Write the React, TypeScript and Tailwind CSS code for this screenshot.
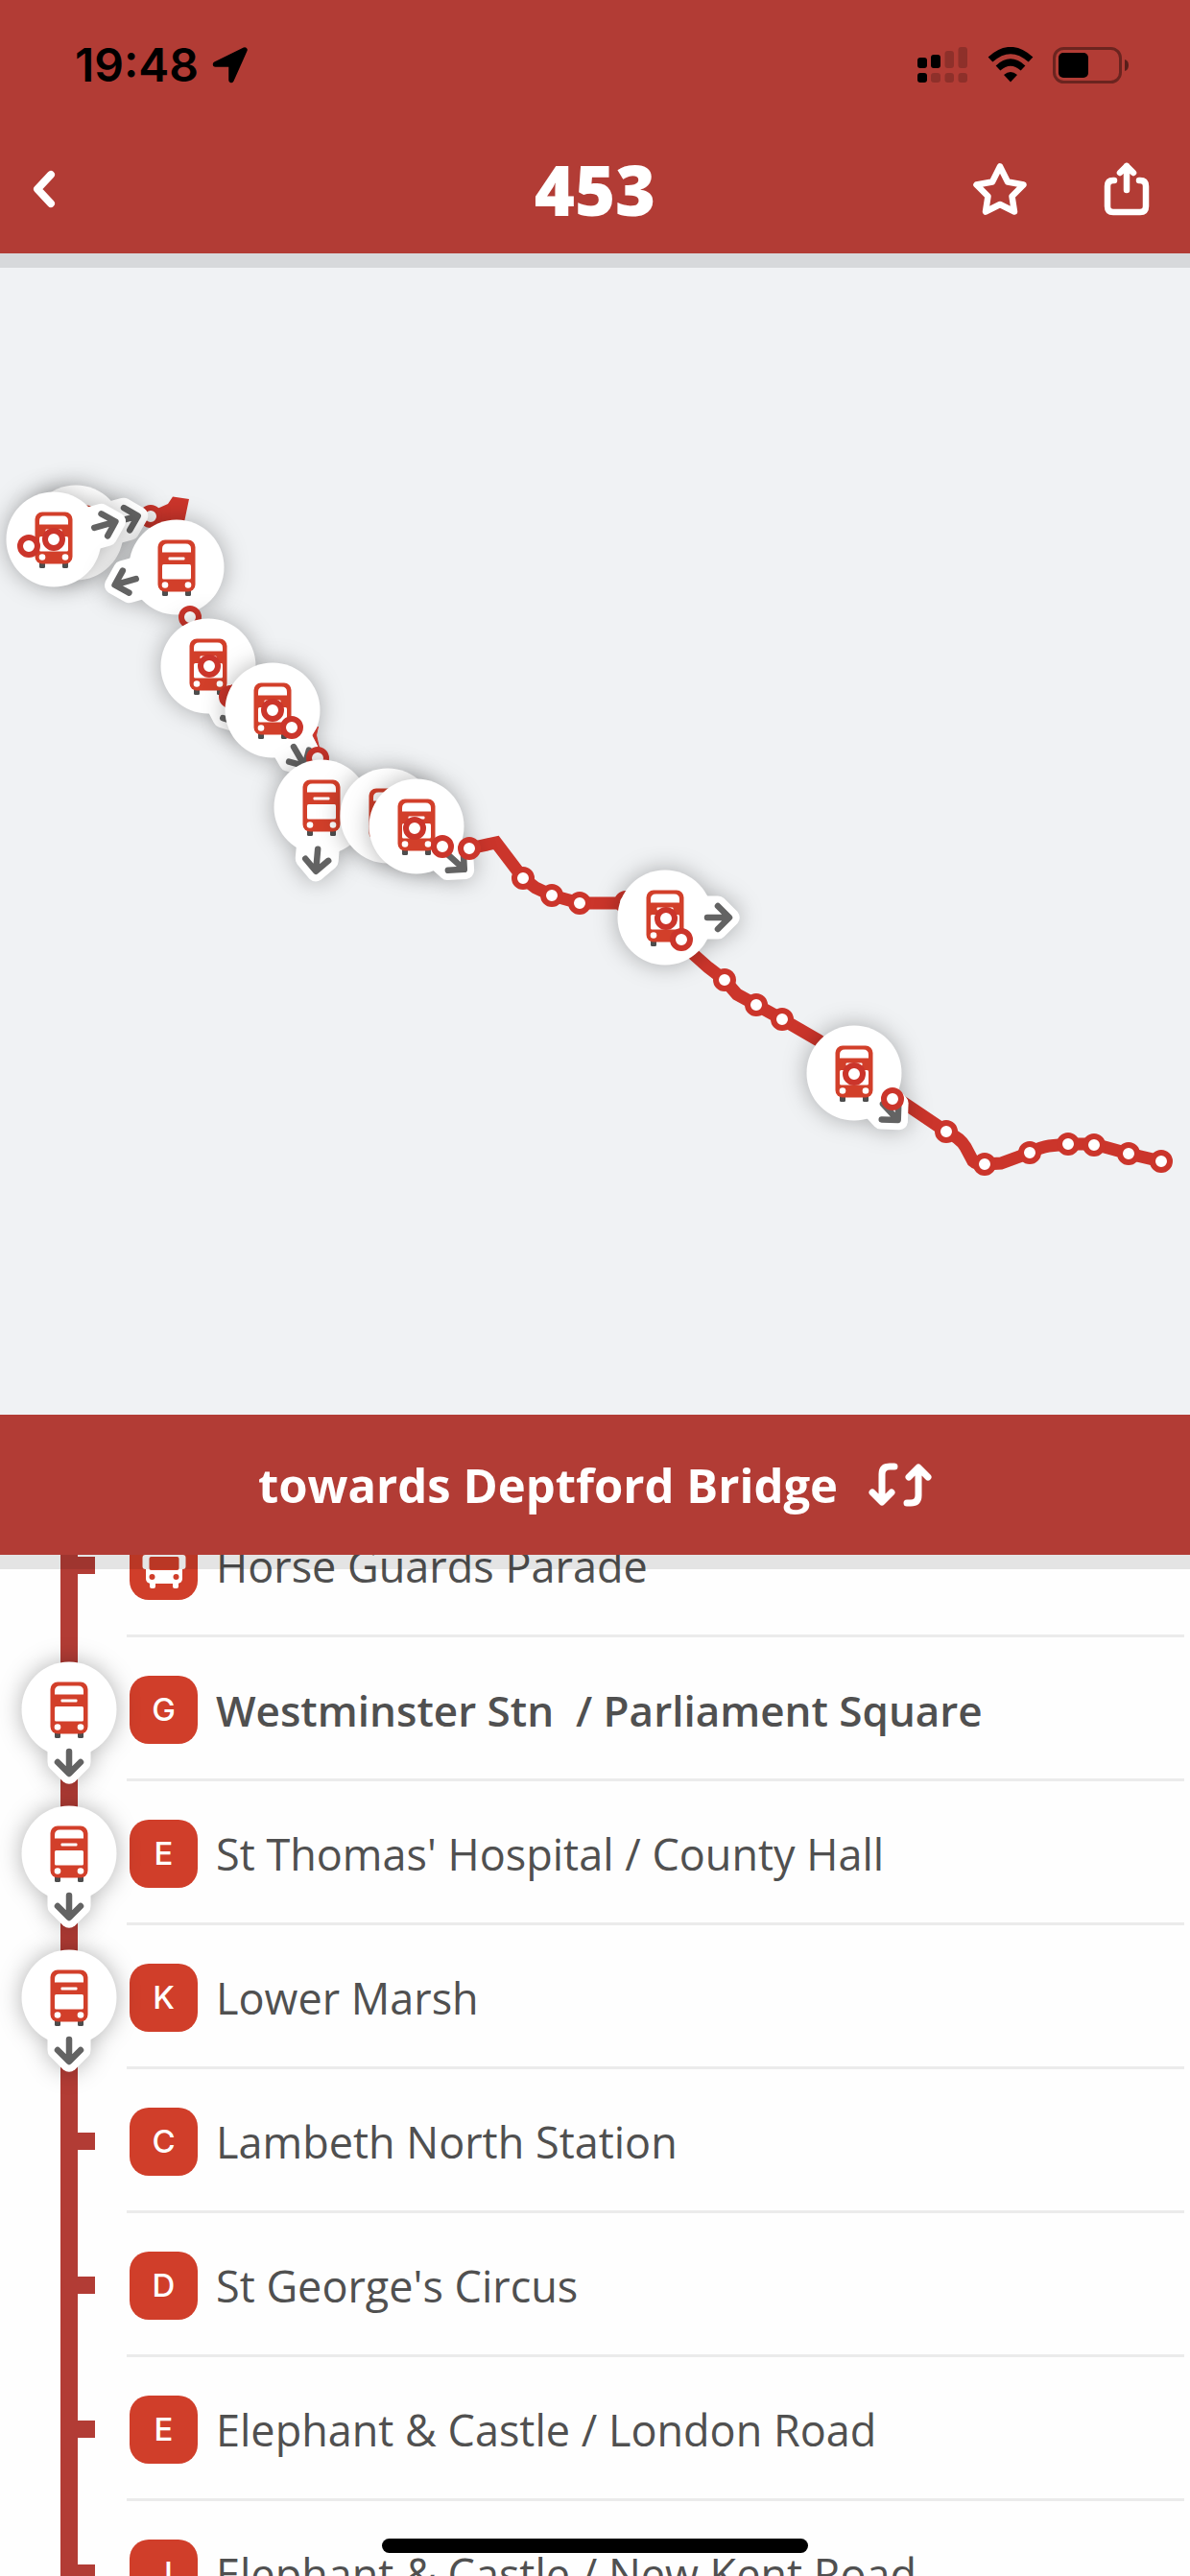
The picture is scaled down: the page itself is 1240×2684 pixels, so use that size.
import React from 'react'

type Stop = { code: string | null; name: string; major?: boolean; bus?: boolean }
type Vehicle = { x: number; y: number; heading: number; stopOnTop?: [number, number] }

const stops: Stop[] = [
  { code: null, name: 'Horse Guards Parade' },
  { code: 'G', name: 'Westminster Stn  / Parliament Square', major: true, bus: true },
  { code: 'E', name: "St Thomas' Hospital / County Hall", bus: true },
  { code: 'K', name: 'Lower Marsh', bus: true },
  { code: 'C', name: 'Lambeth North Station' },
  { code: 'D', name: "St George's Circus" },
  { code: 'E', name: 'Elephant & Castle / London Road' },
  { code: 'J', name: 'Elephant & Castle / New Kent Road' },
]

// Map coordinates, origin at the top left of the map panel
const vehicles: Vehicle[] = [
  { x: 79, y: 291, heading: -15 },
  { x: 56, y: 298, heading: -16 },
  { x: 184, y: 327, heading: 164, stopOnTop: [198, 379] },
  { x: 217, y: 430, heading: 62, stopOnTop: [240, 462] },
  { x: 284, y: 476, heading: 60, stopOnTop: [331, 526] },
  { x: 335, y: 577, heading: 95 },
  { x: 404, y: 586, heading: 42 },
  { x: 434, y: 597, heading: 42 },
  { x: 693, y: 692, heading: 0 },
  { x: 890, y: 854, heading: 47 },
]

const stopsBelow = [
  [157, 274], [652, 676],
]

const stopsAbove = [
  [56, 298], [30, 305], [218, 430], [284, 476], [304, 494], [432, 599], [461, 618],
  [489, 620], [545, 651], [575, 669], [604, 677], [694, 693], [710, 715], [755, 757],
  [788, 783], [815, 798], [890, 855], [930, 881], [986, 915], [1026, 949], [1073, 937],
  [1113, 928], [1140, 929], [1176, 938], [1210, 946],
]

function BusMarker({ heading }: { heading: number }) {
  return (
    <g>
      <g className="[filter:drop-shadow(0_0_12px_rgba(0,0,0,0.3))]" fill="#fff">
        <circle r="49.5" />
        <path
          transform={`rotate(${heading - 90})`}
          d="M-22.5 30V55Q-22.5 59-20 61.500L-6 75.500Q0 80 6 75.500L20 61.500Q22.500 59 22.500 55V30Z"
        />
      </g>
      <path
        transform={`rotate(${heading - 90})`}
        d="M0 44V66M-12 55L0 67L12 55"
        fill="none"
        stroke="#636363"
        strokeWidth="6.500"
        strokeLinecap="round"
        strokeLinejoin="round"
      />
      <rect x="-15" y="20" width="6" height="10" rx="1.500" fill="#4d4d4d" />
      <rect x="9" y="20" width="6" height="10" rx="1.500" fill="#4d4d4d" />
      <rect x="-19.500" y="-28.500" width="39" height="54" rx="7.500" fill="#d23f2a" />
      <path d="M-15-15.500V-19Q-15-24.500-9.500-24.500H9.500Q15-24.500 15-19V-15.500Z" fill="#fff" />
      <rect x="-8.500" y="-10.500" width="17" height="3" rx="1" fill="#fff" />
      <rect x="-15" y="-3" width="30" height="15.500" rx="1.500" fill="#fff" />
      <circle cx="-12" cy="18.500" r="3.300" fill="#fff" />
      <circle cx="12" cy="18.500" r="3.300" fill="#fff" />
    </g>
  )
}

function StopRing({ x, y }: { x: number; y: number }) {
  return <circle cx={x} cy={y} r="9" fill="#fff" stroke="#cb352b" strokeWidth="6" />
}

function StatusBar() {
  return (
    <div className="flex h-[136px] items-center justify-between pr-[63px] pl-[78px] text-black">
      <div className="flex items-center gap-3.5">
        <span className="font-['Inter'] text-[48px] leading-none font-semibold">19:48</span>
        <svg viewBox="0 0 38 38" className="h-[38px] w-[38px]" aria-label="Location in use">
          <path
            d="M3.500 18L34 3L20 34.500V18Z"
            stroke="#000"
            strokeWidth="5.500"
            strokeLinejoin="round"
          />
        </svg>
      </div>
      <div className="flex items-center gap-5">
        <svg viewBox="0 0 53 38" className="h-[38px] w-[53px]" aria-label="Signal strength">
          <rect x="0" y="11" width="10" height="11" rx="3" />
          <rect x="14" y="8" width="10" height="14" rx="3" />
          <rect x="0" y="27" width="10" height="10" rx="3" />
          <g fillOpacity="0.2">
            <rect x="28.500" y="4" width="9.500" height="18" rx="3" />
            <rect x="42.500" y="0" width="9.500" height="22" rx="3" />
            <rect x="14" y="27" width="10" height="10" rx="3" />
            <rect x="28.500" y="27" width="9.500" height="10" rx="3" />
            <rect x="42.500" y="27" width="9.500" height="10" rx="3" />
          </g>
        </svg>
        <svg viewBox="0 0 48 38" className="h-[38px] w-[48px]" aria-label="Wi-Fi">
          <path d="M3 13Q24-6 45 13" fill="none" stroke="#000" strokeWidth="7" />
          <path d="M11 22Q24 10 37 22" fill="none" stroke="#000" strokeWidth="7" />
          <path d="M24 36.500L17 29Q24 23 31 29Z" />
        </svg>
        <svg viewBox="0 0 80 38" className="h-[38px] w-[80px]" aria-label="Battery">
          <rect x="1.500" y="1.500" width="69" height="35" rx="10" fill="none" stroke="#000" strokeOpacity="0.4" strokeWidth="3" />
          <rect x="6" y="6" width="31" height="26" rx="5" />
          <path d="M75 13Q79 14 79 19Q79 24 75 25Z" fillOpacity="0.5" />
        </svg>
      </div>
    </div>
  )
}

function NavBar() {
  return (
    <div className="grid h-[128px] grid-cols-[1fr_auto_1fr] items-center px-[42px] pb-1.5 text-white">
      <button type="button" aria-label="Back" className="-ml-4 flex h-16 w-16 items-center">
        <svg viewBox="0 0 36 44" className="h-11 w-9" fill="none" stroke="currentColor" strokeWidth="8" strokeLinecap="round" strokeLinejoin="round">
          <path d="M27 7L13 22L27 37" />
        </svg>
      </button>
      <h1 className="font-['Open_Sans'] text-[72px] leading-none font-extrabold">453</h1>
      <div className="flex items-center justify-end gap-19">
        <button type="button" aria-label="Add to favourites" className="flex h-16 w-16 items-center justify-center">
          <svg viewBox="0 0 56 56" className="h-14 w-14" fill="none" stroke="currentColor" strokeWidth="6.500" strokeLinejoin="round">
            <path d="M28 4.500L36 20.500L52.500 23.500L40.500 35.500L43 51.500L28 44L13 51.500L15.500 35.500L3.500 23.500L20 20.500Z" />
          </svg>
        </button>
        <button type="button" aria-label="Share" className="flex h-16 w-12 items-center justify-center">
          <svg viewBox="0 0 48 56" className="h-14 w-12" fill="none" stroke="currentColor" strokeWidth="6.500" strokeLinecap="round" strokeLinejoin="round">
            <path d="M11 19H10Q4 19 4 25V46Q4 52 10 52H38Q44 52 44 46V25Q44 19 38 19H37M24 4V29M17 11L24 4L31 11" />
          </svg>
        </button>
      </div>
    </div>
  )
}

function RouteMap() {
  return (
    <section aria-label="Route map" className="relative min-h-0 flex-[1210] overflow-hidden bg-[#f0f2f4]">
      <svg viewBox="0 0 1240 1210" preserveAspectRatio="xMinYMin slice" className="block h-full w-full">
        <path
          d="M489 620L517 614L545 651L558 661L575 669L604 677H652L694 698L720 728L738 744L755 757L768 772L788 783L815 798L853 820L890 848L940 884L986 915Q1001 922 1006 931L1014 946Q1018 950 1026 949L1043 948L1073 937Q1085 931 1093 930L1113 928H1140L1176 938L1210 946"
          fill="none"
          stroke="#cb352b"
          strokeWidth="13"
        />
        <path d="M157 269L175 261L180 253.500L197 256L192 280L160 285Z" fill="#cb352b" />
        {stopsBelow.map(([x, y]) => (
          <StopRing key={`${x}-${y}`} x={x} y={y} />
        ))}
        {vehicles.map((v) => (
          <React.Fragment key={`${v.x}-${v.y}`}>
            <g transform={`translate(${v.x} ${v.y})`}>
              <BusMarker heading={v.heading} />
            </g>
            {v.stopOnTop && <StopRing x={v.stopOnTop[0]} y={v.stopOnTop[1]} />}
            {v.x === 217 && <path d="M229 456L242 449L240 474Z" fill="#cb352b" />}
            {v.x === 284 && (
              <path d="M331.500 493L326 502L332.500 515L329.500 502Z" fill="#cb352b" stroke="#cb352b" />
            )}
          </React.Fragment>
        ))}
        {stopsAbove.map(([x, y]) => (
          <StopRing key={`${x}-${y}`} x={x} y={y} />
        ))}
      </svg>
      <div className="absolute inset-x-0 top-0 h-[15px] bg-black/10" />
    </section>
  )
}

function DirectionBar() {
  return (
    <button
      type="button"
      className="flex h-[146px] w-full shrink-0 items-center justify-center gap-8 bg-[#b23c35] text-white"
    >
      <span className="font-['Open_Sans'] text-[49px] leading-none font-bold">towards Deptford Bridge</span>
      <svg viewBox="0 0 66 46" className="h-[46px] w-[66px]" fill="none" stroke="currentColor" strokeWidth="7" strokeLinecap="round" strokeLinejoin="round" aria-hidden="true">
        <path d="M27 4H22Q14 4 14 12V40M4 31L14 41L24 31M40 42H44Q52 42 52 34V6M42 15L52 5L62 15" />
      </svg>
    </button>
  )
}

function StopBadge({ code }: { code: string | null }) {
  return (
    <span className="flex h-[71px] w-[71px] shrink-0 items-center justify-center rounded-[20px] bg-[#d03e2a] font-['Inter'] text-[33px] leading-none font-medium text-white">
      {code ?? (
        <svg viewBox="-24 -24 48 48" className="h-12 w-12" aria-label="Bus stop">
          <g fill="#fff">
            <rect x="-19" y="-23" width="38" height="41" rx="5" />
            <rect x="-22.500" y="-12" width="8" height="15" rx="3" />
            <rect x="14.500" y="-12" width="8" height="15" rx="3" />
            <rect x="-15" y="14" width="6" height="9" rx="2" />
            <rect x="9" y="14" width="6" height="9" rx="2" />
          </g>
          <rect x="-15.500" y="-10" width="31" height="14" rx="2" fill="#d03e2a" />
          <circle cx="-12.500" cy="11" r="3" fill="#d03e2a" />
          <circle cx="12.500" cy="11" r="3" fill="#d03e2a" />
        </svg>
      )}
    </span>
  )
}

function StopRow({ stop }: { stop: Stop }) {
  return (
    <li className="flex h-[150px] pr-1.5">
      <div className="relative flex w-[132px] shrink-0 items-center pl-[63px]">
        <span className="w-[18px] self-stretch bg-[#b23c35]" />
        <span className="h-[18px] w-[18px] bg-[#b23c35]" />
        {stop.bus && (
          <svg viewBox="-60 -60 120 120" className="absolute left-3 z-10 h-[120px] w-[120px] overflow-visible" aria-label="Bus here">
            <BusMarker heading={90} />
          </svg>
        )}
      </div>
      <a
        href="#stop"
        className="flex min-w-0 flex-1 items-center gap-[19px] border-b-3 border-[#ebebeb] pt-1 pl-[3px] text-[#505050]"
      >
        <StopBadge code={stop.code} />
        <span
          className={
            stop.major
              ? "truncate font-['Open_Sans'] text-[44px] leading-[60px] font-semibold whitespace-pre"
              : "truncate font-['Open_Sans'] text-[45px] leading-[60px] font-medium"
          }
        >
          {stop.name}
        </span>
      </a>
    </li>
  )
}

export default function App() {
  return (
    <main className="relative flex h-screen flex-col overflow-hidden bg-white font-['Open_Sans',sans-serif]">
      <header className="shrink-0 bg-[#b23c35]">
        <StatusBar />
        <NavBar />
      </header>
      <RouteMap />
      <DirectionBar />
      <section aria-label="Stops" className="relative min-h-0 flex-[1064] overflow-hidden bg-[#fefefe]">
        <ul className="-mt-16">
          {stops.map((stop) => (
            <StopRow key={stop.name} stop={stop} />
          ))}
        </ul>
        <div className="absolute inset-x-0 top-0 z-20 h-[15px] bg-black/10" />
      </section>
      <div className="absolute bottom-6 left-1/2 z-30 h-[15px] w-[444px] -translate-x-1/2 rounded-full bg-black" />
    </main>
  )
}
